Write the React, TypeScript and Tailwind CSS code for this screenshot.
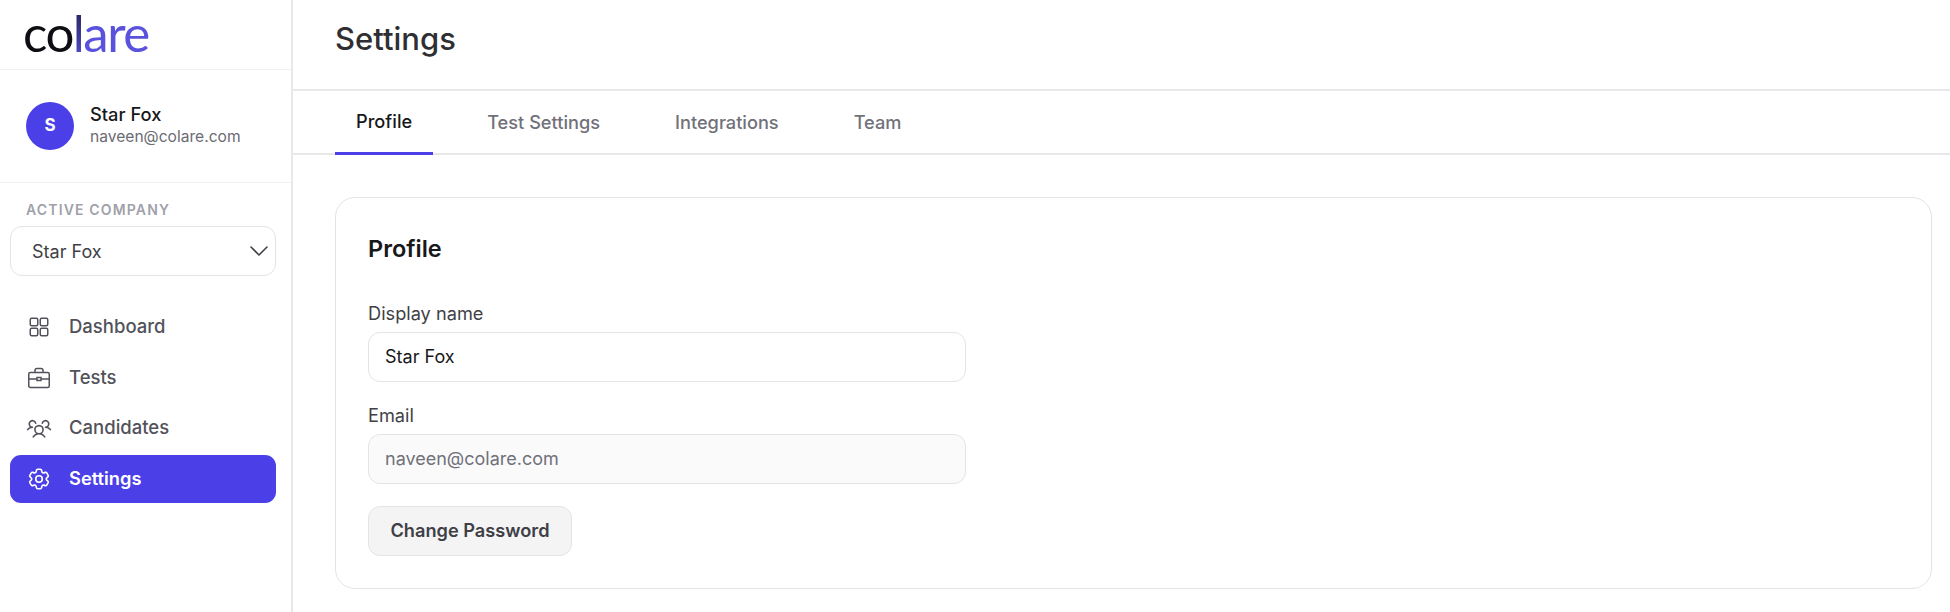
import { ChevronDown } from 'lucide-react';
import { HiOutlineCog6Tooth } from 'react-icons/hi2';
import { PiUsersThree } from 'react-icons/pi';

function DashboardIcon() {
  return (
    <svg viewBox="0 0 24 24" fill="none" stroke="currentColor" strokeWidth="1.5" className="w-[24px] h-[24px] shrink-0">
      <rect x="3.25" y="3.25" width="7.5" height="7.5" rx="1.5" />
      <rect x="13.25" y="3.25" width="7.5" height="7.5" rx="1.5" />
      <rect x="3.25" y="13.25" width="7.5" height="7.5" rx="1.5" />
      <rect x="13.25" y="13.25" width="7.5" height="7.5" rx="1.5" />
    </svg>
  );
}

function TestsIcon() {
  return (
    <svg viewBox="0 0 24 24" fill="none" stroke="currentColor" strokeWidth="1.5" className="w-[24px] h-[24px] shrink-0">
      <rect x="1.75" y="6.5" width="20.5" height="15" rx="1.5" />
      <path d="M8 6.5V4.5a2 2 0 0 1 2-2h4a2 2 0 0 1 2 2v2" />
      <path d="M1.75 13H10M14 13h8.25" />
      <rect x="10" y="11.5" width="4" height="3" />
    </svg>
  );
}

function CandidatesIcon() {
  return <PiUsersThree className="w-[26px] h-[26px] -mx-px shrink-0" />;
}

function SettingsIcon() {
  return <HiOutlineCog6Tooth className="w-[26px] h-[26px] -mx-px shrink-0" />;
}

const nav = [
  { label: 'Dashboard', icon: DashboardIcon },
  { label: 'Tests', icon: TestsIcon },
  { label: 'Candidates', icon: CandidatesIcon },
  { label: 'Settings', icon: SettingsIcon, active: true },
];

const tabs = ['Profile', 'Test Settings', 'Integrations', 'Team'];

function Sidebar() {
  return (
    <aside className="w-[293px] shrink-0 border-r-2 border-[#e8e8ea] flex flex-col">
      <div className="h-[70px] border-b border-[#f0f0f1] pl-[23px] flex items-start">
        <div className="text-[51px] leading-[65px] font-['Lato',sans-serif] tracking-[-1.5px] font-normal">
          <span className="text-[#0d0d12]">co</span>
          <span className="bg-gradient-to-b from-[#1f1d4d] to-[#5a52dd] bg-clip-text text-transparent">l</span>
          <span className="text-[#5a52dd]">are</span>
        </div>
      </div>
      <div className="h-[113px] border-b border-[#f0f0f1] pl-[26px] flex items-center gap-[16px]">
        <div className="w-[48px] h-[48px] rounded-full bg-[#4b3fe8] text-white flex items-center justify-center text-[17px] font-bold">S</div>
        <div>
          <div className="text-[18.3px] leading-[22px] text-[#18181b] font-medium">Star Fox</div>
          <div className="text-[15.6px] leading-[24px] text-[#6b6b73]">naveen@colare.com</div>
        </div>
      </div>
      <div className="px-[10px]">
        <div className="pl-[16px] mt-[18px] text-[14px] leading-[18px] font-semibold tracking-[1.15px] text-[#a1a1aa]">ACTIVE COMPANY</div>
        <div className="mt-[7px] h-[50px] w-[266px] rounded-[12px] border border-[#e4e4e7] pl-[21px] flex items-center justify-between text-[18px] text-[#3f3f46]">
          <span>Star Fox</span>
          <ChevronDown className="w-[32px] h-[32px] text-[#3f3f46]" strokeWidth={1.2} />
        </div>
        <nav className="mt-[27px] flex flex-col gap-[2.5px]">
          {nav.map((item) => {
            const Icon = item.icon;
            return (
              <div
                key={item.label}
                className={
                  item.active
                    ? 'h-[48px] w-[266px] rounded-[11px] bg-[#4b3fe8] text-white font-semibold flex items-center pl-[17px] gap-[18px] text-[18.3px]'
                    : 'h-[48px] w-[266px] rounded-[11px] text-[#52525b] font-medium flex items-center pl-[17px] gap-[18px] text-[18.5px]'
                }
              >
                <Icon />
                <span>{item.label}</span>
              </div>
            );
          })}
        </nav>
      </div>
    </aside>
  );
}

function Field({ label, value, disabled }: { label: string; value: string; disabled?: boolean }) {
  return (
    <div>
      <div className="text-[18.2px] leading-[24px] text-[#3f3f46]">{label}</div>
      <div
        className={
          disabled
            ? 'mt-[7px] h-[50px] w-[598px] rounded-[12px] border border-[#e4e4e7] bg-[#fafafa] px-[16px] pb-[2px] flex items-center text-[18px] text-[#71717a]'
            : 'mt-[7px] h-[50px] w-[598px] rounded-[12px] border border-[#e4e4e7] px-[16px] pb-[2px] flex items-center text-[18px] text-[#18181b]'
        }
      >
        {value}
      </div>
    </div>
  );
}

export default function App() {
  return (
    <div className="w-[1950px] h-[612px] overflow-hidden bg-white flex font-['Inter',sans-serif]">
      <Sidebar />
      <main className="flex-1 min-w-0">
        <header className="h-[91px] border-b-2 border-[#e8e8ea] pl-[42px] flex items-center pb-[10px]">
          <h1 className="text-[31px] font-medium text-[#2f2f33]">Settings</h1>
        </header>
        <div className="h-[64px] border-b-2 border-[#e8e8ea] pl-[42px] flex gap-[33px]">
          {tabs.map((t, i) => (
            <div
              key={t}
              className={
                i === 0
                  ? 'h-[64px] px-[21px] border-b-[3px] border-[#4b3fe8] flex items-center text-[18.2px] font-medium text-[#18181b]'
                  : 'h-[64px] px-[21px] flex items-center text-[18.2px] font-medium text-[#71717a]'
              }
            >
              {t}
            </div>
          ))}
        </div>
        <div className="pl-[42px] pr-[18px] pt-[42px]">
          <section className="h-[392px] rounded-[20px] border border-[#e4e4e7] pl-[32px] pt-[35px]">
            <h2 className="text-[23.5px] leading-[32px] font-semibold text-[#18181b]">Profile</h2>
            <div className="mt-[36px] flex flex-col gap-[21px]">
              <Field label="Display name" value="Star Fox" />
              <Field label="Email" value="naveen@colare.com" disabled />
            </div>
            <button className="mt-[22px] h-[50px] w-[204px] rounded-[12px] border border-[#e4e4e7] bg-[#f4f4f5] text-[18.2px] font-semibold text-[#3f3f46]">
              Change Password
            </button>
          </section>
        </div>
      </main>
    </div>
  );
}
